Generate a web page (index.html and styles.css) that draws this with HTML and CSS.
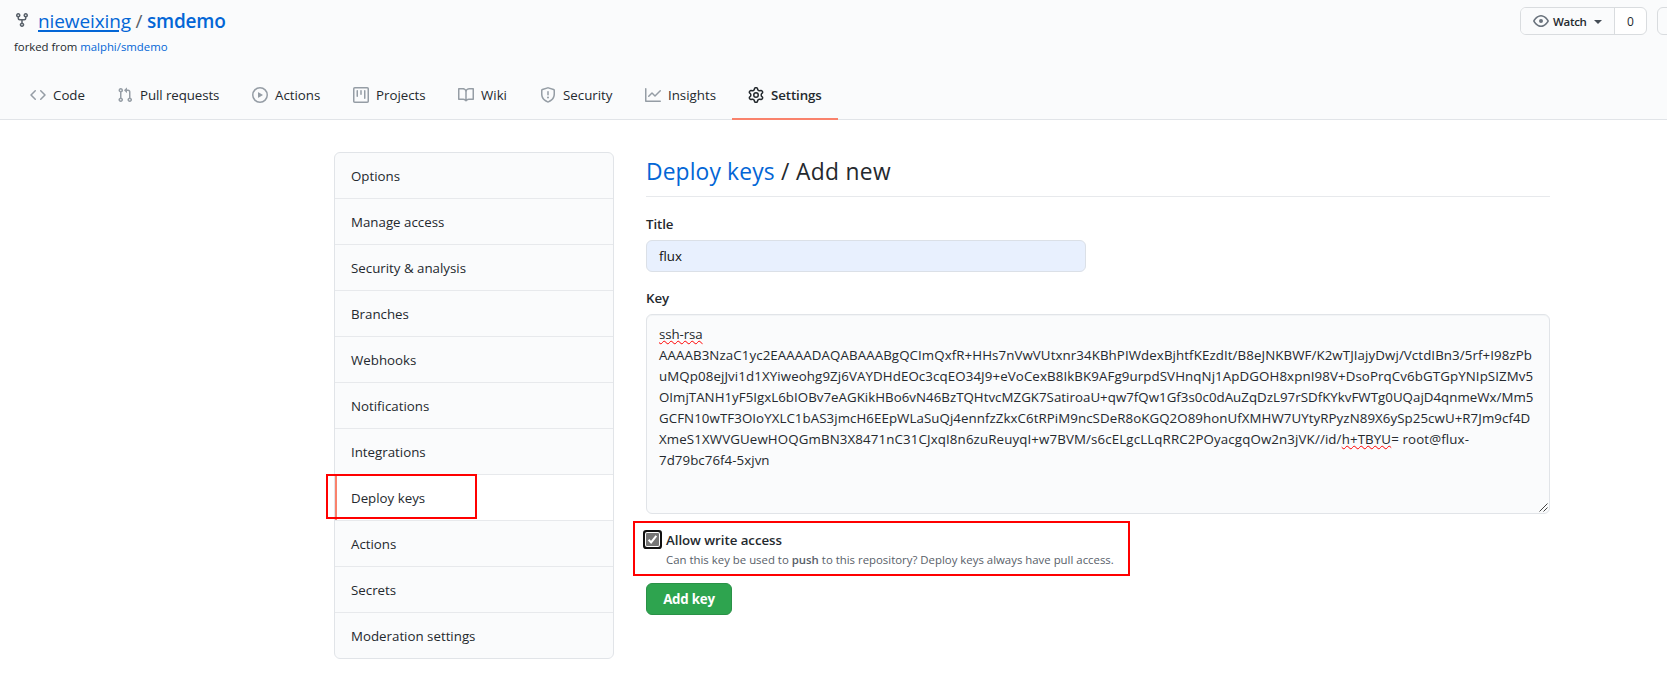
FILE: index.html
```html
<!DOCTYPE html>
<html lang="en">
<head>
<meta charset="utf-8">
<title>Deploy keys</title>
<link rel="stylesheet" href="styles.css">
</head>
<body>
<header class="head">
  <div class="top">
    <div>
      <h1 class="repo">
        <svg class="fork" width="16" height="16" viewBox="0 0 16 16"><path fill-rule="evenodd" d="M5 3.25a.75.75 0 11-1.5 0 .75.75 0 011.5 0zm0 2.122a2.25 2.25 0 10-1.5 0v.878A2.25 2.25 0 005.75 8.5h1.5v2.128a2.251 2.251 0 101.5 0V8.5h1.5a2.25 2.25 0 002.25-2.25v-.878a2.25 2.25 0 10-1.5 0v.878a.75.75 0 01-.75.75h-4.5A.75.75 0 015 6.25v-.878zm3.75 7.378a.75.75 0 11-1.5 0 .75.75 0 011.5 0zm3-8.75a.75.75 0 100-1.5.75.75 0 000 1.5z"/></svg>
        <a class="owner">nieweixing</a><span class="sep">/</span><a class="name">smdemo</a>
      </h1>
      <p class="forked">forked from <a>malphi/smdemo</a></p>
    </div>
    <div class="actions">
      <div class="watch">
        <span class="watch-btn"><svg width="16" height="16" viewBox="0 0 16 16"><path fill-rule="evenodd" d="M1.679 7.932c.412-.621 1.242-1.75 2.366-2.717C5.175 4.242 6.527 3.5 8 3.5c1.473 0 2.824.742 3.955 1.715 1.124.967 1.954 2.096 2.366 2.717a.119.119 0 010 .136c-.412.621-1.242 1.75-2.366 2.717C10.825 11.758 9.473 12.5 8 12.5c-1.473 0-2.824-.742-3.955-1.715C2.92 9.818 2.09 8.69 1.679 8.068a.119.119 0 010-.136zM8 2c-1.981 0-3.67.992-4.933 2.078C1.797 5.169.88 6.423.43 7.1a1.619 1.619 0 000 1.798c.45.678 1.367 1.932 2.637 3.024C4.329 13.008 6.019 14 8 14c1.981 0 3.67-.992 4.933-2.078 1.27-1.091 2.187-2.345 2.637-3.023a1.619 1.619 0 000-1.798c-.45-.678-1.367-1.932-2.637-3.023C11.671 2.992 9.981 2 8 2zm0 8a2 2 0 100-4 2 2 0 000 4z"/></svg><b>Watch</b><i class="caret"></i></span>
        <span class="count">0</span>
      </div>
      <div class="cut"></div>
    </div>
  </div>
  <nav class="tabs">
    <a class="tab t1"><svg width="16" height="16" viewBox="0 0 16 16"><path fill-rule="evenodd" d="M4.72 3.22a.75.75 0 011.06 1.06L2.06 8l3.72 3.72a.75.75 0 11-1.06 1.06L.47 8.53a.75.75 0 010-1.06l4.25-4.25zm6.56 0a.75.75 0 10-1.06 1.06L13.94 8l-3.72 3.72a.75.75 0 101.06 1.06l4.25-4.25a.75.75 0 000-1.06l-4.25-4.25z"/></svg><span>Code</span></a>
    <a class="tab t2"><svg width="16" height="16" viewBox="0 0 16 16"><path fill-rule="evenodd" d="M7.177 3.073L9.573.677A.25.25 0 0110 .854v4.792a.25.25 0 01-.427.177L7.177 3.427a.25.25 0 010-.354zM3.75 2.5a.75.75 0 100 1.5.75.75 0 000-1.5zm-2.25.75a2.25 2.25 0 113 2.122v5.256a2.251 2.251 0 11-1.5 0V5.372A2.25 2.25 0 011.5 3.25zM11 2.5h-1V4h1a1 1 0 011 1v5.628a2.251 2.251 0 101.5 0V5A2.5 2.5 0 0011 2.5zm1 10.25a.75.75 0 111.5 0 .75.75 0 01-1.5 0zM3.75 12a.75.75 0 100 1.5.75.75 0 000-1.5z"/></svg><span>Pull requests</span></a>
    <a class="tab t3"><svg width="16" height="16" viewBox="0 0 16 16"><path fill-rule="evenodd" d="M1.5 8a6.5 6.5 0 1113 0 6.5 6.5 0 01-13 0zM8 0a8 8 0 100 16A8 8 0 008 0zM6.379 5.227A.25.25 0 006 5.442v5.117a.25.25 0 00.379.214l4.264-2.559a.25.25 0 000-.428L6.379 5.227z"/></svg><span>Actions</span></a>
    <a class="tab t4"><svg width="16" height="16" viewBox="0 0 16 16"><path fill-rule="evenodd" d="M1.75 0A1.75 1.75 0 000 1.75v12.5C0 15.216.784 16 1.75 16h12.5A1.75 1.75 0 0016 14.25V1.75A1.75 1.75 0 0014.25 0H1.75zM1.5 1.75a.25.25 0 01.25-.25h12.5a.25.25 0 01.25.25v12.5a.25.25 0 01-.25.25H1.75a.25.25 0 01-.25-.25V1.75zM11.75 3a.75.75 0 00-.75.75v7.5a.75.75 0 001.5 0v-7.5a.75.75 0 00-.75-.75zm-8.25.75a.75.75 0 011.5 0v5.5a.75.75 0 01-1.5 0v-5.5zM8 3a.75.75 0 00-.75.75v3.5a.75.75 0 001.5 0v-3.5A.75.75 0 008 3z"/></svg><span>Projects</span></a>
    <a class="tab t5"><svg width="16" height="16" viewBox="0 0 16 16"><path fill-rule="evenodd" d="M0 1.75A.75.75 0 01.75 1h4.253c1.227 0 2.317.59 3 1.501A3.744 3.744 0 0111.006 1h4.245a.75.75 0 01.75.75v10.5a.75.75 0 01-.75.75h-4.507a2.25 2.25 0 00-1.591.659l-.622.621a.75.75 0 01-1.06 0l-.622-.621A2.25 2.25 0 005.258 13H.75a.75.75 0 01-.75-.75V1.75zm8.755 3a2.25 2.25 0 012.25-2.25H14.5v9h-3.757c-.71 0-1.4.201-1.992.572l.004-7.322zm-1.504 7.324l.004-5.073-.002-2.253A2.25 2.25 0 005.003 2.5H1.5v9h3.757a3.75 3.75 0 011.994.574z"/></svg><span>Wiki</span></a>
    <a class="tab t6"><svg width="16" height="16" viewBox="0 0 16 16"><path fill-rule="evenodd" d="M7.467.133a1.75 1.75 0 011.066 0l5.25 1.68A1.75 1.75 0 0115 3.48V7c0 1.566-.32 3.182-1.303 4.682-.983 1.498-2.585 2.813-5.032 3.855a1.7 1.7 0 01-1.33 0c-2.447-1.042-4.049-2.357-5.032-3.855C1.32 10.182 1 8.566 1 7V3.48a1.75 1.75 0 011.217-1.667l5.25-1.68zm.61 1.429a.25.25 0 00-.153 0l-5.25 1.68a.25.25 0 00-.174.238V7c0 1.358.275 2.666 1.057 3.86.784 1.194 2.121 2.34 4.366 3.297a.2.2 0 00.154 0c2.245-.956 3.582-2.104 4.366-3.298C13.225 9.666 13.5 8.36 13.5 7V3.48a.25.25 0 00-.174-.237l-5.25-1.68zM9 10.5a1 1 0 11-2 0 1 1 0 012 0zm-.25-5.75a.75.75 0 10-1.5 0v3a.75.75 0 001.5 0v-3z"/></svg><span>Security</span></a>
    <a class="tab t7"><svg width="16" height="16" viewBox="0 0 16 16"><path fill-rule="evenodd" d="M1.5 1.75a.75.75 0 00-1.5 0v12.5c0 .414.336.75.75.75h14.5a.75.75 0 000-1.5H1.5V1.75zm14.28 2.53a.75.75 0 00-1.06-1.06L10 7.94 7.53 5.47a.75.75 0 00-1.06 0L3.22 8.72a.75.75 0 001.06 1.06L7 7.06l2.47 2.47a.75.75 0 001.06 0l5.25-5.25z"/></svg><span>Insights</span></a>
    <a class="tab t8 current"><svg width="16" height="16" viewBox="0 0 16 16"><path fill-rule="evenodd" d="M7.429 1.525a6.593 6.593 0 011.142 0c.036.003.108.036.137.146l.289 1.105c.147.56.55.967.997 1.189.174.086.341.183.501.29.417.278.97.423 1.53.27l1.102-.303c.11-.03.175.016.195.046.219.31.41.641.573.989.014.031.022.11-.059.19l-.815.806c-.411.406-.562.957-.53 1.456a4.588 4.588 0 010 .582c-.032.499.119 1.05.53 1.456l.815.806c.08.08.073.159.059.19a6.494 6.494 0 01-.573.99c-.02.029-.086.074-.195.045l-1.103-.303c-.559-.153-1.112-.008-1.529.27-.16.107-.327.204-.5.29-.449.222-.851.628-.998 1.189l-.289 1.105c-.029.11-.101.143-.137.146a6.613 6.613 0 01-1.142 0c-.036-.003-.108-.037-.137-.146l-.289-1.105c-.147-.56-.55-.967-.997-1.189a4.502 4.502 0 01-.501-.29c-.417-.278-.97-.423-1.53-.27l-1.102.303c-.11.03-.175-.016-.195-.046a6.492 6.492 0 01-.573-.989c-.014-.031-.022-.11.059-.19l.815-.806c.411-.406.562-.957.53-1.456a4.587 4.587 0 010-.582c.032-.499-.119-1.05-.53-1.456l-.815-.806c-.08-.08-.073-.159-.059-.19a6.44 6.44 0 01.573-.99c.02-.029.086-.075.195-.045l1.103.303c.559.153 1.112.008 1.529-.27.16-.107.327-.204.5-.29.449-.222.851-.628.998-1.189l.289-1.105c.029-.11.101-.143.137-.146zM8 0c-.236 0-.47.01-.701.03-.743.065-1.29.615-1.458 1.261l-.29 1.106c-.017.066-.078.158-.211.224a5.994 5.994 0 00-.668.386c-.123.082-.233.09-.3.071L3.27 2.776c-.644-.177-1.392.02-1.82.63a7.977 7.977 0 00-.704 1.217c-.315.675-.111 1.422.363 1.891l.815.806c.05.048.098.147.088.294a6.084 6.084 0 000 .772c.01.147-.038.246-.088.294l-.815.806c-.474.469-.678 1.216-.363 1.891.2.428.436.835.704 1.218.428.609 1.176.806 1.82.63l1.103-.303c.066-.019.176-.011.299.071.213.143.436.272.668.386.133.066.194.158.212.224l.289 1.106c.169.646.715 1.196 1.458 1.26a8.094 8.094 0 001.402 0c.743-.064 1.29-.614 1.458-1.26l.29-1.106c.017-.066.078-.158.211-.224a5.98 5.98 0 00.668-.386c.123-.082.233-.09.3-.071l1.102.302c.644.177 1.392-.02 1.82-.63.268-.382.505-.789.704-1.217.315-.675.111-1.422-.364-1.891l-.814-.806c-.05-.048-.098-.147-.088-.294a6.1 6.1 0 000-.772c-.01-.147.039-.246.088-.294l.814-.806c.475-.469.679-1.216.364-1.891a7.992 7.992 0 00-.704-1.218c-.428-.609-1.176-.806-1.82-.63l-1.103.303c-.066.019-.176.011-.299-.071a5.991 5.991 0 00-.668-.386c-.133-.066-.194-.158-.212-.224L10.16 1.29C9.99.645 9.444.095 8.701.031A8.094 8.094 0 008 0zm1.5 8a1.5 1.5 0 11-3 0 1.5 1.5 0 013 0zM11 8a3 3 0 11-6 0 3 3 0 016 0z"/></svg><span>Settings</span></a>
  </nav>
</header>
<div class="page">
  <nav class="menu">
    <a>Options</a>
    <a>Manage access</a>
    <a>Security &amp; analysis</a>
    <a>Branches</a>
    <a>Webhooks</a>
    <a>Notifications</a>
    <a>Integrations</a>
    <a class="selected">Deploy keys<i class="mark mark-menu"></i></a>
    <a>Actions</a>
    <a>Secrets</a>
    <a>Moderation settings</a>
  </nav>
  <main class="main">
    <h2 class="subhead"><a>Deploy keys</a> / Add new</h2>
    <label class="label">Title</label>
    <div class="input">flux</div>
    <label class="label label-key">Key</label>
    <div class="area">
      <span class="l1"><u>ssh-rsa</u></span>
      <span class="l2">AAAAB3NzaC1yc2EAAAADAQABAAABgQCImQxfR+HHs7nVwVUtxnr34KBhPIWdexBjhtfKEzdIt/B8eJNKBWF/K2wTJIajyDwj/VctdIBn3/5rf+I98zPb</span>
      <span class="l3">uMQp08ejJvi1d1XYiweohg9Zj6VAYDHdEOc3cqEO34J9+eVoCexB8IkBK9AFg9urpdSVHnqNj1ApDGOH8xpnI98V+DsoPrqCv6bGTGpYNIpSIZMv5</span>
      <span class="l4">OImjTANH1yF5IgxL6bIOBv7eAGKikHBo6vN46BzTQHtvcMZGK7SatiroaU+qw7fQw1Gf3s0c0dAuZqDzL97rSDfKYkvFWTg0UQajD4qnmeWx/Mm5</span>
      <span class="l5">GCFN10wTF3OIoYXLC1bAS3jmcH6EEpWLaSuQj4ennfzZkxC6tRPiM9ncSDeR8oKGQ2O89honUfXMHW7UYtyRPyzN89X6ySp25cwU+R7Jm9cf4D</span>
      <span class="l6">XmeS1XWVGUewHOQGmBN3X8471nC31CJxqI8n6zuReuyqI+w7BVM/s6cELgcLLqRRC2POyacgqOw2n3jVK//id/<u>h+TBYU</u>= root@flux-</span>
      <span class="l7">7d79bc76f4-5xjvn</span>
      <svg class="grip" width="9" height="9" viewBox="0 0 9 9"><path d="M.5 8.5l8-8M4.5 8.5l4-4"/></svg>
    </div>
    <div class="write">
      <span class="box"><svg width="13" height="13" viewBox="0 0 13 13"><path d="M2.6 6.8l2.5 2.6 5.2-6.6"/></svg></span>
      <div>
        <div class="write-title">Allow write access</div>
        <div class="note">Can this key be used to <b>push</b> to this repository? Deploy keys always have pull access.</div>
      </div>
      <i class="mark mark-write"></i>
    </div>
    <button class="submit">Add key</button>
  </main>
</div>
</body>
</html>
```
FILE: styles.css
```css
* { box-sizing: border-box; }
body {
  margin: 0;
  background: #fff;
  color: #24292e;
  font: 13.3px/21px "Open Sans", "Noto Sans", sans-serif;
  overflow: hidden;
}
a { color: #0366d6; text-decoration: none; white-space: nowrap; }
h1, h2, p { margin: 0; font-weight: 400; }
svg { fill: currentColor; flex: none; display: block; }

.head {
  height: 120px;
  background: #fafbfc;
  border-bottom: 1px solid #e1e4e8;
  display: flex;
  flex-direction: column;
  justify-content: space-between;
}
.top { display: flex; justify-content: space-between; padding-left: 14px; }
.repo { display: flex; height: 38px; align-items: center; font-size: 19px; line-height: 30px; padding-top: 4px; }
.fork { color: #586069; margin-right: 8px; position: relative; top: -1px; }
.owner { text-decoration: underline; text-underline-offset: 2px; text-decoration-thickness: 2px; width: 93px; letter-spacing: -.1px; }
.sep { color: #586069; width: 16px; text-align: center; }
.name { font-weight: 600; letter-spacing: -.2px; }
.forked { font-size: 11.4px; line-height: 18px; letter-spacing: -.02px; }
.actions { display: flex; gap: 10px; padding-top: 7px; width: 147px; overflow: hidden; }
.watch { display: flex; width: 127px; height: 28px; flex: none; border: 1px solid #d9dcdf; border-radius: 6px; background: #fff; font-size: 11.5px; overflow: hidden; }
.watch-btn { display: flex; align-items: center; width: 94px; padding-left: 12px; background: #fafbfc; border-right: 1px solid #d9dcdf; }
.watch-btn svg { color: #6a737d; margin-right: 4px; }
.watch b { font-weight: 600; letter-spacing: -.3px; }
.caret { border: 4px solid transparent; border-top-color: #444d56; border-bottom: 0; margin: 2px 0 0 7px; }
.count { flex: 1; text-align: center; line-height: 27px; font-size: 12px; font-weight: 500; }
.cut { width: 40px; height: 28px; flex: none; border: 1px solid #d9dcdf; border-radius: 6px; }

.tabs { display: flex; padding-left: 14px; margin-bottom: -1px; height: 49px; }
.tab { display: flex; align-items: center; gap: 7px; padding: 1px 0 0 16px; color: #24292e; border-bottom: 2px solid transparent; }
.tab svg { color: #959da5; }
.t1 { width: 87px; }
.t2 { width: 135px; letter-spacing: -.08px; }
.t3 { width: 101px; }
.t4 { width: 105px; }
.t5 { width: 82px; }
.t6 { width: 105px; }
.t7 { width: 103px; }
.t8 { width: 106px; }
.current { font-weight: 600; letter-spacing: -.1px; border-color: #f9826c; }
.current svg { color: #24292e; }

.page { display: flex; gap: 32px; padding: 32px 0 0 334px; }
.menu { width: 280px; height: 507px; border: 1px solid #e1e4e8; border-radius: 6px; background: #fafbfc; }
.menu a { display: block; height: 46px; line-height: 47px; padding-left: 16px; color: #24292e; border-bottom: 1px solid #e7e9ec; }
.menu a:last-child { border-bottom: 0; height: 45px; }
.menu .selected { position: relative; background: #fff; box-shadow: inset 2px 0 #f9826c; }
.mark { position: absolute; border: 2px solid #f00; }
.mark-menu { left: -9px; top: -1px; width: 151px; height: 45px; }

.main { width: 904px; display: flex; flex-direction: column; align-items: flex-start; }
.subhead { width: 100%; height: 45px; font-size: 22.8px; line-height: 39px; letter-spacing: .34px; border-bottom: 1px solid #e7e9ec; }
.subhead a { letter-spacing: .14px; }
.label { font-weight: 600; letter-spacing: -.1px; margin-top: 17px; height: 26px; }
.label-key { margin-top: 16px; }
.input { width: 440px; height: 32px; padding: 0 12px; line-height: 30px; background: #e8f0fe; border: 1px solid #dbe0e7; border-radius: 6px; color: #111; }
.area { position: relative; width: 904px; height: 200px; padding: 9px 12px; background: #fafbfc; border: 1px solid #e1e4e8; border-radius: 6px; box-shadow: inset 0 1px 0 rgba(225,228,232,.3); }
.area span { display: block; white-space: nowrap; }
.l1 { letter-spacing: -.1px; }
.l2 { letter-spacing: .09px; }
.l3 { letter-spacing: .102px; }
.l4 { letter-spacing: .025px; }
.l5 { letter-spacing: .067px; }
.l6 { letter-spacing: .125px; }
.l7 { letter-spacing: .05px; }
.area u { text-decoration: underline wavy #f00 .7px; text-underline-offset: 1px; text-decoration-skip-ink: none; }
.grip { position: absolute; right: 1px; bottom: 1px; fill: none; stroke: #444; stroke-width: 1; }
.write { position: relative; display: flex; margin-top: 16px; height: 53px; gap: 7px; }
.box { width: 13px; height: 13px; margin-top: 3px; border-radius: 1px; background: #767676; box-shadow: 0 0 0 1px #fff, 0 0 0 3px #101010; }
.box svg { fill: none; stroke: #fff; stroke-width: 2; }
.write-title { font-weight: 600; line-height: 21px; letter-spacing: -.05px; }
.note { font-size: 11.4px; line-height: 18px; color: #586069; white-space: nowrap; }
.note b { font-weight: 600; }
.mark-write { left: -13px; top: -9px; width: 497px; height: 55px; }
.submit { width: 86px; height: 32px; padding: 0; color: #fff; background: #2ea44f; border: 1px solid #2a9147; border-radius: 6px; font: 700 13.3px/20px "Open Sans", sans-serif; letter-spacing: -.2px; }
```
